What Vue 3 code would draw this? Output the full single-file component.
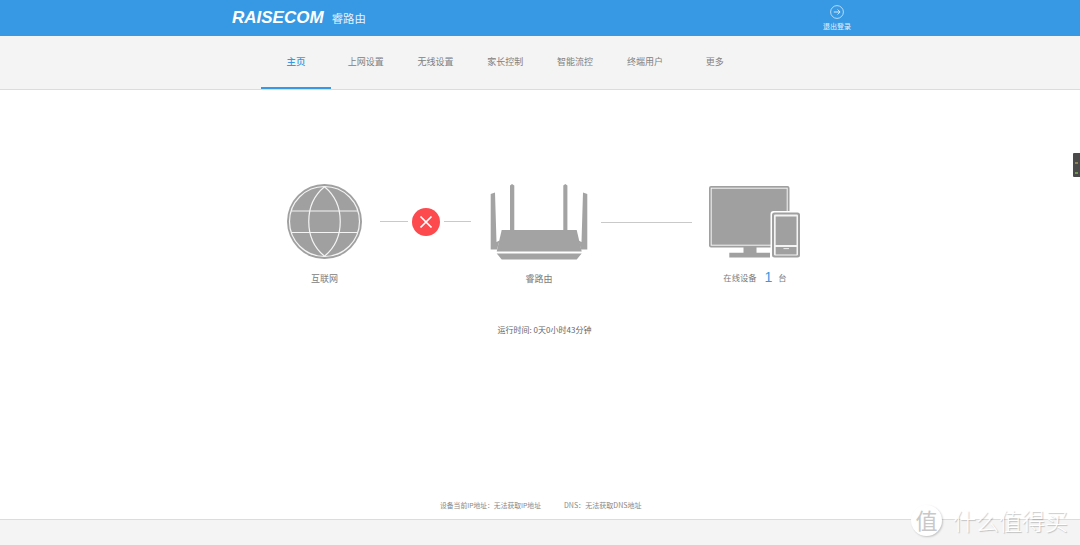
<template>
  <div class="page">
    <header class="topbar">
      <span class="logo">RAISECOM</span>
      <span class="product">睿路由</span>
      <a class="logout">
        <svg width="14" height="14" viewBox="0 0 14 14" fill="none" stroke="#d7ebfa">
          <circle cx="7" cy="7" r="6.4" stroke-width="0.8" />
          <path d="M3.8 7H10M7.6 4.5 10.1 7 7.6 9.5" stroke-width="1" />
        </svg>
        <span>退出登录</span>
      </a>
    </header>

    <nav class="tabs">
      <a v-for="(tab, i) in tabs" :key="tab" class="tab" :class="{ active: i === 0 }">{{ tab }}</a>
    </nav>

    <main class="content">
      <div class="diagram">
        <div class="node node-globe">
          <svg width="75" height="75" viewBox="0 0 75 75">
            <circle cx="37.5" cy="37.5" r="37.5" fill="#a0a0a0" />
            <g fill="none" stroke="#f4f4f4" stroke-width="1.2">
              <circle cx="37.5" cy="37.5" r="35" />
              <path d="M37.5 2.8C16.5 20 16.5 55 37.5 72.2C58.5 55 58.5 20 37.5 2.8Z" />
              <path d="M4.5 27H70.5M4.5 48.5H70.5" />
            </g>
          </svg>
          <span class="label label-globe">互联网</span>
        </div>

        <div class="link link-down">
          <i class="line short"></i>
          <span class="fail">
            <svg width="28" height="28" viewBox="0 0 28 28">
              <circle cx="14" cy="14" r="14" fill="#fc4a4f" />
              <path d="M8.5 8.5 19.5 19.5M19.5 8.5 8.5 19.5" stroke="#fff" stroke-width="1.7" />
            </svg>
          </span>
          <i class="line short-r"></i>
        </div>

        <div class="node node-router">
          <svg width="98" height="76" viewBox="0 0 98 76">
            <g fill="#a3a3a3">
              <path d="M11.7 46H86.7L91.7 67.5H6.7Z" />
              <path d="M6.7 69.4H91.7L86.7 75.5H11.7Z" />
              <path d="M20 1.5 22 0 24.3 1.5V46H20Z" />
              <path d="M73.3 1.5 75.3 0 77.4 1.5V46H73.3Z" />
              <path d="M.7 10 5 8.5 6.5 58 9.5 56.5 7 65.5H.7Z" />
              <path d="M97.3 10 93 8.5 91.5 58 88.5 56.5 91 65.5H97.3Z" />
            </g>
          </svg>
          <span class="label label-router">睿路由</span>
        </div>

        <div class="link link-up">
          <i class="line long"></i>
        </div>

        <div class="node node-device">
          <svg width="91" height="72" viewBox="0 0 91 72">
            <rect x="0" y="0" width="80.5" height="61.5" rx="2" fill="#a0a0a0" />
            <rect x="2.2" y="2.2" width="76" height="57" fill="#a0a0a0" stroke="#f4f4f4" stroke-width="1" />
            <path d="M34.5 61H47.5V66.7H61V71.5H20.3V66.7H34.5Z" fill="#a0a0a0" />
            <rect x="61.5" y="25" width="29.5" height="47" rx="3" fill="#fff" />
            <rect x="63" y="26.5" width="28" height="45" rx="2.5" fill="#a0a0a0" />
            <rect x="65" y="28.5" width="24" height="41" rx="1" fill="#f4f4f4" />
            <rect x="66.7" y="30.5" width="20.8" height="28.5" fill="#a0a0a0" />
            <rect x="66.7" y="61" width="20.8" height="7.5" fill="#a0a0a0" />
            <rect x="74.5" y="62.2" width="5.5" height="0.9" fill="#f4f4f4" />
          </svg>
          <span class="label label-device">在线设备<b class="count">1</b>台</span>
        </div>
      </div>

      <p class="uptime">运行时间: 0天0小时43分钟</p>

      <p class="status">
        <span>设备当前IP地址：无法获取IP地址</span>
        <span class="dns">DNS：无法获取DNS地址</span>
      </p>
    </main>

    <footer class="bottom"></footer>

    <div class="side-handle">
      <i class="mark mark-amber"></i>
      <i class="mark mark-green"></i>
    </div>

    <div class="watermark">
      <span class="wm-badge">值</span>
      <span class="wm-text">什么值得买</span>
    </div>
  </div>
</template>

<script setup>
const tabs = ['主页', '上网设置', '无线设置', '家长控制', '智能流控', '终端用户', '更多']
</script>

<style>
html,
body {
  margin: 0;
  background: #fff;
}
</style>

<style scoped>
.page {
  position: relative;
  display: flex;
  flex-direction: column;
  width: 1080px;
  height: 545px;
  overflow: hidden;
  font-family: "Noto Sans CJK SC", "Noto Sans", sans-serif;
  color: #7c7c7c;
}

.topbar {
  display: flex;
  align-items: center;
  flex: 0 0 36px;
  padding: 0 229px 0 232px;
  background: #3799e3;
  color: #fff;
}

.logo {
  font-family: "Liberation Sans", Arial, sans-serif;
  font-size: 17px;
  font-weight: 700;
  font-style: italic;
  line-height: 36px;
}

.product {
  margin-left: 8px;
  font-size: 11.4px;
  color: #e4f2fc;
}

.logout {
  display: flex;
  flex-direction: column;
  align-items: center;
  align-self: flex-start;
  margin-left: auto;
  padding-top: 5px;
  font-size: 7px;
  line-height: 10px;
  color: #e4f2fc;
}

.logout span {
  margin-top: 2px;
}

.tabs {
  display: flex;
  flex: 0 0 54px;
  box-sizing: border-box;
  padding-left: 261px;
  background: #f4f4f4;
  border-bottom: 1px solid #dcdcdc;
}

.tab {
  box-sizing: border-box;
  width: 69.8px;
  height: 53px;
  font-size: 9px;
  line-height: 51px;
  text-align: center;
  color: #808080;
}

.tab.active {
  font-size: 9.5px;
  font-weight: 500;
  color: #3799e3;
  border-bottom: 2px solid #3799e3;
}

.content {
  display: flex;
  flex-direction: column;
  flex: 1;
  min-height: 0;
}

.diagram {
  display: flex;
  align-items: flex-start;
  padding: 94px 0 0 287px;
}

.node {
  display: flex;
  flex-direction: column;
  align-items: center;
}

.label {
  font-size: 9px;
  line-height: 14px;
  white-space: nowrap;
}

.label-globe {
  margin-top: 13px;
}

.label-router {
  margin-top: 12px;
}

.node-device svg {
  margin-top: 2px;
}

.label-device {
  display: flex;
  align-items: center;
  margin-top: 12px;
  padding-left: 1px;
  font-size: 8.3px;
}

.count {
  margin: 0 6px 0 8px;
  font-family: "Liberation Sans", Arial, sans-serif;
  font-size: 14px;
  font-weight: 400;
  color: #3799e3;
}

.link {
  display: flex;
  align-items: center;
  height: 75px;
}

.link-down {
  width: 128px;
  padding-left: 18px;
  box-sizing: border-box;
}

.link-up {
  width: 121px;
  padding-left: 13px;
  box-sizing: border-box;
}

.line {
  display: block;
  height: 1px;
  background: #c9c9c9;
}

.short {
  width: 28px;
}

.short-r {
  width: 27px;
}

.long {
  width: 91px;
  margin-top: 2px;
}

.fail {
  display: flex;
  margin: 0 4px;
}

.uptime {
  margin: 38px 0 0;
  padding-left: 9px;
  font-size: 8px;
  line-height: 12px;
  text-align: center;
  color: #666;
}

.status {
  display: flex;
  gap: 23px;
  margin: auto 0 9px;
  padding-left: 440px;
  font-size: 6.8px;
  line-height: 10px;
  color: #888;
}

.dns {
  font-size: 7.05px;
}

.bottom {
  flex: 0 0 26px;
  box-sizing: border-box;
  background: #f4f4f4;
  border-top: 1px solid #dcdcdc;
}

.side-handle {
  position: absolute;
  top: 153px;
  right: 0;
  display: flex;
  flex-direction: column;
  align-items: center;
  gap: 8px;
  box-sizing: border-box;
  width: 7px;
  height: 24px;
  padding-top: 9px;
  background: #4a4a4a;
  border-radius: 1px 0 0 1px;
}

.mark {
  display: block;
  width: 3px;
  height: 2px;
}

.mark-amber {
  background: #8f8350;
}

.mark-green {
  background: #6f9a4a;
}

.watermark {
  position: absolute;
  left: 911px;
  top: 505px;
  display: flex;
  align-items: center;
  gap: 11px;
}

.wm-badge {
  width: 31px;
  height: 31px;
  border-radius: 50%;
  background: #fff;
  box-shadow: 1px 1px 2px rgba(0, 0, 0, 0.2);
  font-size: 22px;
  line-height: 29px;
  text-align: center;
  color: #c8c8c8;
}

.wm-text {
  font-size: 23px;
  font-weight: 300;
  line-height: 31px;
  color: #fff;
  text-shadow: 1px 1px 1px rgba(0, 0, 0, 0.22);
}
</style>
